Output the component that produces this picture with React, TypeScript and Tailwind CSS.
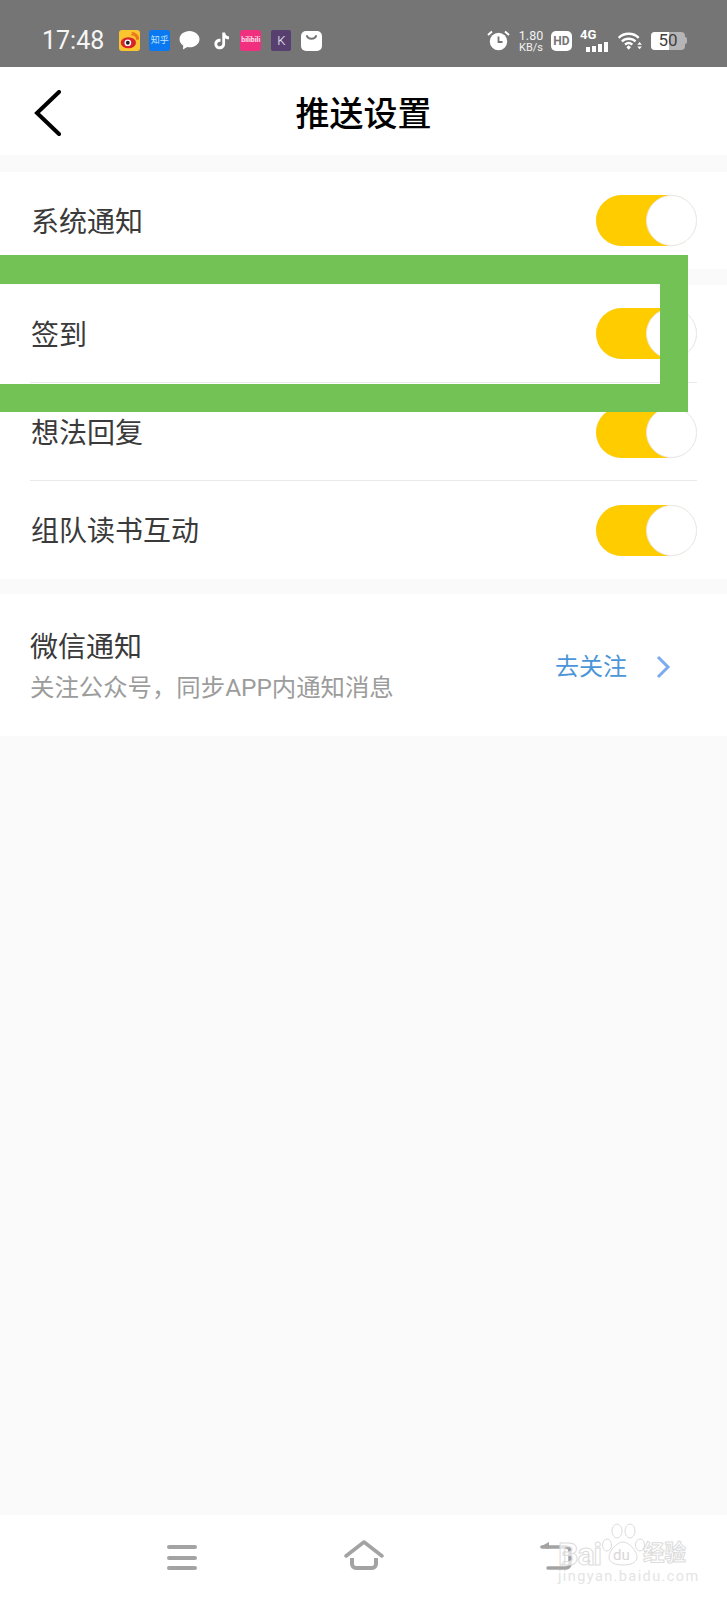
const FONT = "font-['Roboto','Noto_Sans_CJK_SC',sans-serif]";

function Toggle() {
  return (
    <div className="relative w-[101px] h-[51px] rounded-full border border-[#ebe9e4] bg-white">
      <div className="absolute -left-px -top-px w-[72px] h-[51px] rounded-l-full bg-[#ffcc00]" />
      <div className="absolute left-[49px] -top-px w-[51px] h-[51px] rounded-full bg-white border border-[#ebe9e4]" />
    </div>
  );
}

function Row({ label, h, line }: { label: string; h: string; line?: boolean }) {
  return (
    <div className={`relative flex items-center justify-between pl-[31px] pr-[30px] bg-white ${h}`}>
      <span className="pt-[4px] text-[28px] leading-none text-[#3a3a3a]">{label}</span>
      <Toggle />
      {line && <div className="absolute left-[30px] right-[30px] bottom-0 h-px bg-[#e9e9e9]" />}
    </div>
  );
}

function AppIcons() {
  return (
    <div className="flex items-center gap-[9px] ml-[15px]">
      <div className="w-[21px] h-[21px] rounded-[3px] bg-[#fbc52f] flex items-center justify-center">
        <svg width="19" height="19" viewBox="0 0 17 17">
          <ellipse cx="7.5" cy="10.5" rx="6.8" ry="5" fill="#d8232b" />
          <circle cx="7" cy="10.5" r="3" fill="#fff" />
          <circle cx="7" cy="10.5" r="1.7" fill="#222" />
          <path d="M10 3.5a4 4 0 0 1 5 4.5M10.5 1.500a6 6 0 0 1 6 6" stroke="#e8731c" strokeWidth="1.3" fill="none" />
        </svg>
      </div>
      <div className="w-[21px] h-[21px] rounded-[3px] bg-[#0a78f0] flex items-center justify-center text-[9px] leading-none text-[#bfe6ff]">知乎</div>
      <svg width="21" height="21" viewBox="0 0 21 21">
        <path d="M10.5 1C5 1 .5 4.6.5 9.2c0 2.6 1.4 4.8 3.7 6.3L4 19.6l4.3-2.5c.7.1 1.4.2 2.2.2 5.500 0 10-3.600 10-8.100S16 1 10.500 1Z" fill="#fff" />
      </svg>
      <svg width="19" height="21" viewBox="0 0 24 24" className="ml-[3px]">
        <path d="M13 2h3.500c.3 2.800 2 4.600 5 5v3.500c-1.900 0-3.600-.5-5-1.500v7.300c0 3.900-3 6.700-6.800 6.700S3 19.900 3 16.300c0-4 3.500-7 7.800-6.400v3.700c-2.200-.5-4.200.9-4.200 2.800 0 1.700 1.300 3 3 3 1.900 0 3.400-1.300 3.400-3.500V2Z" fill="#fff" />
      </svg>
      <div className="w-[21px] h-[21px] rounded-[3px] bg-[#f0307f] flex items-center justify-center text-[7px] font-bold leading-none text-[#ffe3ee]">bilibili</div>
      <div className="ml-px w-[20px] h-[21px] rounded-[2px] bg-[#57406f] flex items-center justify-center text-[13px] font-light leading-none text-[#f0eaf5]">K</div>
      <div className="ml-px w-[21px] h-[20px] rounded-[5px] bg-white flex items-start justify-center pt-[3px]">
        <svg width="13" height="8" viewBox="0 0 13 8"><path d="M2 2c1 3.500 8 3.500 9 0" stroke="#757575" strokeWidth="2" fill="none" strokeLinecap="round" /></svg>
      </div>
    </div>
  );
}

function StatusRight() {
  return (
    <div className="flex items-center text-white">
      <svg width="23" height="21" viewBox="0 0 23 21" className="mr-[8px]">
        <circle cx="11.5" cy="11.5" r="8.700" fill="#fff" />
        <path d="M11.500 6.500v5.500h4" stroke="#757575" strokeWidth="1.800" fill="none" />
        <path d="M1 5 5 1.500M22 5 18 1.500" stroke="#fff" strokeWidth="2" />
      </svg>
      <div className="flex flex-col items-center w-[26px] mr-[7px] text-[11px] leading-[11px] text-[#f2f2f2]">
        <span className="text-[12.500px] leading-[13px]">1.80</span>
        <span>KB/s</span>
      </div>
      <div className="w-[21px] h-[20px] rounded-[5px] bg-white flex items-center justify-center text-[12px] font-bold leading-none text-[#757575] mr-[8px]">HD</div>
      <div className="relative w-[29px] h-[22px] mr-[8px]">
        <span className="absolute left-0 -top-[2px] text-[13px] font-bold leading-[14px]">4G</span>
        <div className="absolute left-[6px] bottom-0 flex items-end gap-[2px]">
          <div className="w-[4px] h-[5px] bg-white" />
          <div className="w-[4px] h-[6px] bg-white" />
          <div className="w-[4px] h-[8px] bg-white" />
          <div className="w-[4px] h-[10px] bg-white" />
        </div>
      </div>
      <svg width="27" height="20" viewBox="0 0 28 22" className="mr-[7px]">
        <path d="M1 7.500C7 1.500 17 1.500 23 7.500M4.500 11.500c4-4 11-4 15 0M8 15c2.500-2.300 5.500-2.300 8 0" stroke="#fff" strokeWidth="2.600" fill="none" />
        <path d="m9.500 18 2.500-2.200 2.500 2.200-2.500 2.500Z" fill="#fff" />
        <path d="m21.500 15 2.500-3 2.500 3ZM21.500 17h5l-2.500 3Z" fill="#fff" />
      </svg>
      <div className="relative w-[34px] h-[18px] rounded-[4px] bg-[#b5b5b5] overflow-hidden flex items-center justify-center">
        <div className="absolute left-0 top-0 bottom-0 w-[18px] bg-white" />
        <span className="relative text-[17px] leading-none text-[#3f3f3f]">50</span>
      </div>
      <div className="w-[2px] h-[7px] bg-[#b5b5b5] rounded-r-sm" />
    </div>
  );
}

export default function App() {
  return (
    <div className={`relative w-[727px] h-[1600px] overflow-hidden flex flex-col bg-[#fafafa] ${FONT}`}>
      {/* status bar */}
      <div className="h-[67px] shrink-0 bg-[#757575] flex items-center justify-between pl-[42px] pr-[40px] pt-[14px]">
        <div className="flex items-center">
          <span className="text-[25px] leading-none text-[#f5f5f5]">17:48</span>
          <AppIcons />
        </div>
        <StatusRight />
      </div>

      {/* header */}
      <div className="relative h-[88px] shrink-0 bg-white flex items-center justify-center pt-[6px]">
        <svg width="28" height="46" viewBox="0 0 28 46" className="absolute left-[34px] top-[23px]">
          <path d="M25 2 3 23l22 21" stroke="#000" strokeWidth="4" fill="none" strokeLinecap="round" />
        </svg>
        <h1 className="text-[34px] leading-none font-medium text-black">推送设置</h1>
      </div>

      <div className="mt-[17px] flex flex-col">
        <Row label="系统通知" h="h-[97px]" />
        <div className="mt-[16px]" />
        <Row label="签到" h="h-[98px] pb-px" line />
        <Row label="想法回复" h="h-[98px]" line />
        <Row label="组队读书互动" h="h-[98px]" />
      </div>

      {/* wechat */}
      <div className="mt-[15px] h-[142px] bg-white flex items-center justify-between pl-[30px] pr-[56px]">
        <div className="flex flex-col pt-[4px]">
          <span className="text-[28px] leading-[41px] text-[#3a3a3a]">微信通知</span>
          <span className="-mt-px text-[24.400px] leading-[41px] text-[#9c9c9c]">关注公众号，同步APP内通知消息</span>
        </div>
        <div className="flex items-center pt-[4px]">
          <span className="text-[24px] leading-none text-[#4a96d8]">去关注</span>
          <svg width="16" height="24" viewBox="0 0 16 24" className="ml-[28px]">
            <path d="m3 2 10 10L3 22" stroke="#7dabf0" strokeWidth="3" fill="none" />
          </svg>
        </div>
      </div>

      {/* bottom nav */}
      <div className="mt-auto relative h-[85px] bg-white shrink-0 flex items-start pt-[30px]">
        <div className="ml-[167px] w-[30px] flex flex-col gap-[6.500px]">
          <div className="h-[4px] rounded-full bg-[#a3a3a3]" />
          <div className="h-[4px] rounded-full bg-[#a3a3a3]" />
          <div className="h-[4px] rounded-full bg-[#a3a3a3]" />
        </div>
        <svg width="40" height="32" viewBox="0 0 40 32" className="ml-[147px] -mt-[5px]">
          <path d="M2 16 20 2l18 14" stroke="#a3a3a3" strokeWidth="3.500" fill="none" strokeLinecap="round" strokeLinejoin="round" />
          <path d="M8 18v6a4 4 0 0 0 4 4h16a4 4 0 0 0 4-4v-6" stroke="#a3a3a3" strokeWidth="4" fill="none" />
        </svg>
        <svg width="34" height="32" viewBox="0 0 34 32" className="ml-[155px] -mt-[5px]">
          <path d="M3 7h24a4 4 0 0 1 4 4v13a4 4 0 0 1-4 4H9" stroke="#a3a3a3" strokeWidth="3.500" fill="none" strokeLinecap="round" />
          <path d="M10 2 1 7l9 2" fill="#a3a3a3" />
        </svg>

        {/* baidu watermark */}
        <div className="absolute left-[556px] top-[8px] w-[171px] h-[70px]">
          <svg width="44" height="44" viewBox="0 0 44 44" className="absolute left-[46px] top-0">
            <g fill="#fff" fillOpacity="0.75" stroke="#dcdcdc" strokeWidth="1">
              <ellipse cx="5" cy="22" rx="4.500" ry="6" />
              <ellipse cx="15" cy="8" rx="5" ry="7" />
              <ellipse cx="28" cy="8" rx="5" ry="7" />
              <ellipse cx="38" cy="22" rx="4.500" ry="6" />
              <path d="M21 19c6 0 14 9 14 15 0 6-7 8-14 8S7 40 7 34c0-6 8-15 14-15Z" />
            </g>
          </svg>
          <span className="absolute left-[2px] top-[16px] text-[32px] tracking-[-1px] leading-[30px] font-bold text-white/70 [-webkit-text-stroke:1px_#dcdcdc]">Bai</span>
          <span className="absolute left-[57px] top-[25px] text-[15px] leading-none text-[#d8d8d8]">du</span>
          <span className="absolute left-[87px] top-[19px] text-[21.500px] leading-none font-bold text-white/70 [-webkit-text-stroke:1px_#dcdcdc]">经验</span>
          <span className="absolute left-[2px] top-[47px] text-[14.500px] leading-none tracking-[1.400px] text-[#e4e4e4]">jingyan.baidu.com</span>
        </div>
      </div>

      {/* green annotation box */}
      <div className="absolute left-[-40px] top-[255px] w-[728px] h-[157px] border-[28px] border-t-[29px] border-[#72c256]" />
    </div>
  );
}
